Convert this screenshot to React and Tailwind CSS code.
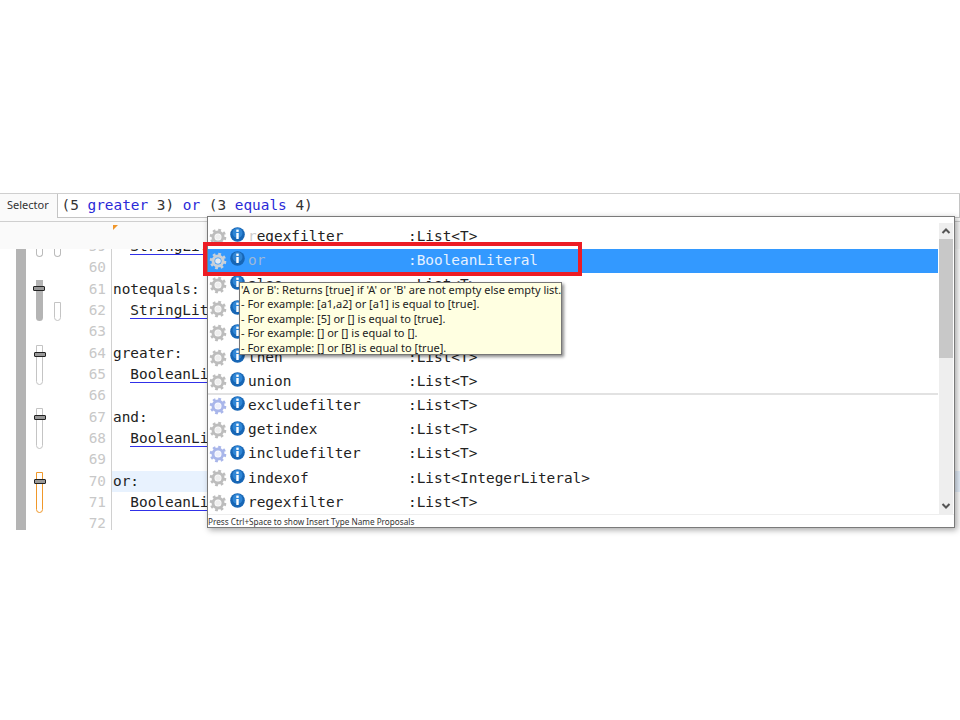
import React from 'react';

const mono = 'font-["DejaVu_Sans_Mono",monospace] text-[14.4px]';
const ui = 'font-["Noto_Sans",sans-serif]';

const rows = [
  { name: 'regexfilter', type: ':List<T>', faded: true },
  { name: 'or', type: ':BooleanLiteral', selected: true },
  { name: 'also', type: ':List<T>' },
  { name: 'equals', type: ':List<T>' },
  { name: 'filter', type: ':List<T>' },
  { name: 'then', type: ':List<T>' },
  { name: 'union', type: ':List<T>', divider: true },
  { name: 'excludefilter', type: ':List<T>', blue: true },
  { name: 'getindex', type: ':List<T>' },
  { name: 'includefilter', type: ':List<T>', blue: true },
  { name: 'indexof', type: ':List<IntegerLiteral>' },
  { name: 'regexfilter', type: ':List<T>' },
];

const code = [
  [59, '  StringLiteral', true],
  [60, ''],
  [61, 'notequals:'],
  [62, '  StringLiteral', true],
  [63, ''],
  [64, 'greater:'],
  [65, '  BooleanLiteral', true],
  [66, ''],
  [67, 'and:'],
  [68, '  BooleanLiteral', true],
  [69, ''],
  [70, 'or:', false, true],
  [71, '  BooleanLiteral', true],
  [72, ''],
];

const tip = [
  "'A or B': Returns [true] if 'A' or 'B' are not empty else empty list.",
  '- For example: [a1,a2] or [a1] is equal to [true].',
  '- For example: [5] or [] is equal to [true].',
  '- For example: [] or [] is equal to [].',
  '- For example: [] or [B] is equal to [true].',
];

function Gear({ blue, light }) {
  const c = blue ? '#a9b6ea' : light ? '#c9d0d8' : '#bdbdbd';
  const hub = blue ? '#eef0fc' : light ? '#e6ebf1' : '#efefef';
  return (
    <svg width="18" height="18" viewBox="0 0 18 18" className="shrink-0">
      <circle cx="9" cy="9" r="7" fill="none" stroke={c} strokeWidth="2.6" strokeDasharray="2.75 2.75" />
      <circle cx="9" cy="9" r="5" fill="none" stroke={c} strokeWidth="3" />
      <circle cx="9" cy="9" r="2.8" fill={hub} />
    </svg>
  );
}

function Info() {
  return (
    <svg width="15" height="15" viewBox="0 0 15 15" className="shrink-0">
      <circle cx="7.5" cy="7.5" r="7.3" fill="#1766b5" />
      <circle cx="7.5" cy="6" r="5" fill="#2f86d6" />
      <rect x="6.3" y="2.6" width="2.4" height="2.3" fill="#fff" />
      <rect x="6.3" y="6" width="2.4" height="6" fill="#fff" />
    </svg>
  );
}

function Row({ row }) {
  return (
    <div className={`relative h-[24.2px] flex items-center pl-[1px] ${mono} ${row.selected ? 'bg-[#3399ff]' : ''}`}>
      <Gear blue={row.blue} light={row.selected} />
      <span className="ml-[3px] -mt-[4px]"><Info /></span>
      <span className={`ml-[3px] w-[160px] ${row.selected ? 'text-[#9db8d6]' : 'text-[#222]'}`}>
        {row.faded ? <><span className="text-[#ccc]">r</span>{row.name.slice(1)}</> : row.name}
      </span>
      <span className={row.selected ? 'text-[#e6f1ff]' : 'text-[#222]'}>{row.type}</span>
      {row.divider && <div className="absolute left-0 right-0 bottom-[-1px] h-[2px] bg-[#e2e2e2]" />}
    </div>
  );
}

function Marker({ className, handle }) {
  return (
    <div className={`relative w-[7px] rounded-b-sm ${className}`}>
      {handle && <div className="absolute left-[-3px] top-[6px] w-[12px] h-[5px] border border-[#222] bg-[#999] rounded-[1px]" />}
    </div>
  );
}

export default function App() {
  return (
    <div className="relative h-[720px] bg-white overflow-hidden">
      <div className="h-[193px]" />
      <div className="h-[29px] border-t border-b border-[#cfcfcf] bg-[#fafafa] flex items-start">
        <span className={`${ui} w-[57px] pl-[7px] pt-[3px] text-[11px] text-[#333]`}>Selector</span>
        <div className={`flex-1 h-[24px] border border-t-0 border-[#c4c4c4] bg-white pl-[3.5px] leading-[22px] ${mono} text-[#333]`}>
          (5 <span className="text-[#2a2ad8]">greater</span> 3) <span className="text-[#2a2ad8]">or</span> (3 <span className="text-[#2a2ad8]">equals</span> 4)
        </div>
      </div>

      <div className="h-[27px] bg-[#fafafa] pl-[113px] pt-[3px]">
        <div className="w-0 h-0 border-t-[5px] border-r-[5px] border-t-[#f0962a] border-r-transparent" />
      </div>

      <div className="h-[281px] flex overflow-hidden">
        <div className="ml-[16px] w-[10px] bg-[#b4b4b4]" />
        <div className="ml-[10px] w-[7px] flex flex-col">
          <Marker className="h-[8px] border border-t-0 border-[#bbb]" />
          <Marker className="mt-[23px] h-[41px] bg-[#b4b4b4]" handle />
          <Marker className="mt-[24px] h-[40px] border border-[#c4c4c4]" handle />
          <Marker className="mt-[23px] h-[41px] border border-[#c4c4c4]" handle />
          <Marker className="mt-[23px] h-[41px] border border-[#f0982a]" handle />
        </div>
        <div className="ml-[11px] w-[7px] flex flex-col">
          <Marker className="h-[8px] border border-t-0 border-[#bbb]" />
          <Marker className="mt-[45px] h-[19px] border border-[#c4c4c4]" />
        </div>
        <div className={`w-[50px] -mt-[13px] text-right pr-[5px] ${mono} text-[#c8c8c8] shrink-0`}>
          {code.map(([n]) => <div key={n} className="h-[21.33px] leading-[21.33px]">{n}</div>)}
        </div>
        <div className={`flex-1 -mt-[13px] border-l border-[#d0d0d0] pl-[1px] ${mono} text-[#222]`}>
          {code.map(([n, text, under, active]) => (
            <div key={n} className={`h-[21.33px] -ml-[1px] pl-[1px] leading-[21.33px] whitespace-pre ${active ? 'bg-[#e8f2fe]' : ''}`}>
              {under ? <>  <span className="border-b border-[#3030e8]">{text.trim()}</span></> : text}
            </div>
          ))}
        </div>
      </div>

      {/* completion popup */}
      <div className="absolute left-[207px] top-[216px] w-[748px] h-[312px] bg-white border border-[#7a7a7a] shadow-[2px_2px_6px_rgba(0,0,0,0.35)] flex flex-col">
        <div className="flex h-[291px] mt-[6px]">
          <div className="w-[730px] pt-[1.5px]">
            {rows.map((row, i) => <Row key={i} row={row} />)}
          </div>
          <div className="w-[14px] ml-[1px] bg-[#eeeeee] flex flex-col items-center">
            <svg width="10" height="16" viewBox="0 0 10 16"><path d="M1.5 10 L5 6.5 L8.5 10" fill="none" stroke="#555" strokeWidth="2" /></svg>
            <div className="w-full h-[119px] bg-[#c8c8c8]" />
            <div className="flex-1" />
            <svg width="10" height="16" viewBox="0 0 10 16"><path d="M1.5 6 L5 9.5 L8.5 6" fill="none" stroke="#555" strokeWidth="2" /></svg>
          </div>
        </div>
        <div className={`${ui} flex-1 text-[8.2px] leading-[13px] text-[#333] border-t border-[#eee]`}>
          Press Ctrl+Space to show Insert Type Name Proposals
        </div>
      </div>

      {/* red highlight around the selected row */}
      <div className="absolute left-[203px] top-[242px] w-[379px] h-[34px] border-4 border-[#ed1c24]" />

      {/* tooltip */}
      <div className={`${ui} absolute left-[239px] top-[282px] w-[323px] h-[73px] bg-[#ffffe1] border border-[#777] shadow-[2px_2px_3px_rgba(0,0,0,0.45)] pl-[1px] text-[11px] leading-[14.4px] text-[#222] whitespace-nowrap`}>
        {tip.map((t) => <div key={t}>{t}</div>)}
      </div>
    </div>
  );
}
